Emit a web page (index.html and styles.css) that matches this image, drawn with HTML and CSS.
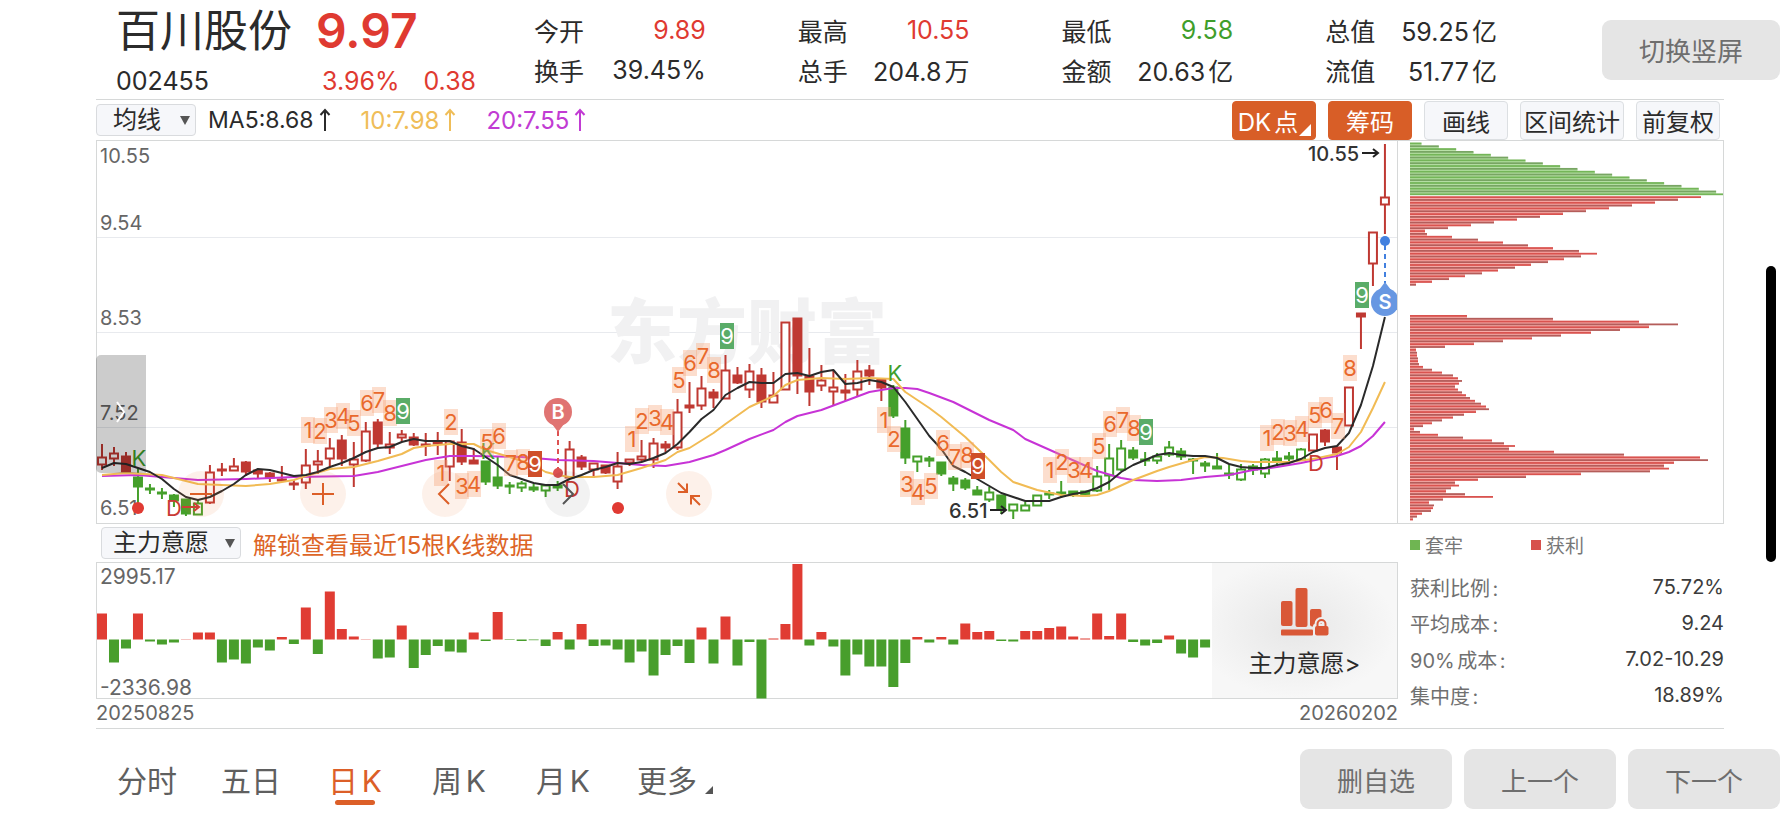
FILE: index.html
```html
<!DOCTYPE html>
<html lang="zh-CN">
<head>
<meta charset="utf-8">
<meta name="viewport" content="width=device-width, initial-scale=1">
<title>百川股份 002455</title>
<link rel="stylesheet" href="styles.css">
</head>
<body>
<div class="page">
  <header class="quote">
    <div class="identity">
      <h1 class="name">百川股份</h1>
      <strong class="price">9.97</strong>
      <span class="code">002455</span>
      <span class="change"><span>3.96%</span><span>0.38</span></span>
    </div>
    <dl class="stats">
      <div class="stat"><dt>今开</dt><dd class="up">9.89</dd></div>
      <div class="stat"><dt>最高</dt><dd class="up">10.55</dd></div>
      <div class="stat"><dt>最低</dt><dd class="down">9.58</dd></div>
      <div class="stat"><dt>总值</dt><dd>59.25亿</dd></div>
      <div class="stat"><dt>换手</dt><dd>39.45%</dd></div>
      <div class="stat"><dt>总手</dt><dd>204.8万</dd></div>
      <div class="stat"><dt>金额</dt><dd>20.63亿</dd></div>
      <div class="stat"><dt>流值</dt><dd>51.77亿</dd></div>
    </dl>
    <button class="pill" type="button">切换竖屏</button>
  </header>

  <main class="board">
    <div class="toolbar">
      <span class="picker"><select class="picker-select" aria-label="主图指标"><option>均线</option></select></span>
      <span class="ma ma5">MA5:8.68<svg class="rise" viewBox="0 0 12 24"><path d="M6 23V2M1.500 7L6 2l4.500 5"/></svg></span>
      <span class="ma ma10">10:7.98<svg class="rise" viewBox="0 0 12 24"><path d="M6 23V2M1.500 7L6 2l4.500 5"/></svg></span>
      <span class="ma ma20">20:7.55<svg class="rise" viewBox="0 0 12 24"><path d="M6 23V2M1.500 7L6 2l4.500 5"/></svg></span>
      <div class="tools">
        <button class="tool on corner" type="button">DK点</button>
        <button class="tool on" type="button">筹码</button>
        <button class="tool" type="button">画线</button>
        <button class="tool wide" type="button">区间统计</button>
        <button class="tool" type="button">前复权</button>
      </div>
    </div>

    <section class="kline">
      <svg id="kline" class="chart" viewBox="97 140 1300 382" role="img" aria-label="日K线"></svg>
      <button class="drawer" type="button" aria-label="展开"><svg viewBox="0 0 12 24"><path d="M2 2l7 10-7 10"/></svg></button>
      <div class="controls">
        <button class="round" type="button" aria-label="缩小"><svg viewBox="0 0 46 46"><path d="M12 23h22"/></svg></button>
        <button class="round" type="button" aria-label="放大"><svg viewBox="0 0 46 46"><path d="M12 23h22M23 12v22"/></svg></button>
        <button class="round" type="button" aria-label="左移"><svg viewBox="0 0 46 46"><path d="M27 13L17 23l10 10"/></svg></button>
        <button class="round grey" type="button" aria-label="右移"><svg viewBox="0 0 46 46"><path d="M19 13l10 10-10 10"/></svg></button>
        <button class="round" type="button" aria-label="退出全屏"><svg viewBox="0 0 46 46"><path d="M12 12l9 9M21 12.500V21h-9M34 34l-9-9M25 33.500V25h9"/></svg></button>
      </div>
    </section>
    <section class="chips">
      <svg id="chips" class="chart" viewBox="1398 140 325 382" role="img" aria-label="筹码分布"></svg>
    </section>

    <div class="subbar">
      <span class="picker"><select class="picker-select" aria-label="副图指标"><option>主力意愿</option></select></span>
      <a class="unlock" href="#">解锁查看最近15根K线数据</a>
    </div>
    <aside class="summary">
      <div class="legend"><span class="key green">套牢</span><span class="key red">获利</span></div>
      <dl class="facts">
        <div class="fact"><dt>获利比例:</dt><dd>75.72%</dd></div>
        <div class="fact"><dt>平均成本:</dt><dd>9.24</dd></div>
        <div class="fact"><dt>90%成本:</dt><dd>7.02-10.29</dd></div>
        <div class="fact"><dt>集中度:</dt><dd>18.89%</dd></div>
      </dl>
    </aside>

    <section class="intent">
      <svg id="intent" class="intent-chart" viewBox="97 562 1115 135" role="img" aria-label="主力意愿"></svg>
      <a class="locked" href="#">
        <svg class="lock-icon" viewBox="0 0 48 48">
          <rect x="0" y="13" width="11.500" height="25" rx="2"/>
          <rect x="14.500" y="0" width="12" height="39" rx="2"/>
          <rect x="29" y="21" width="11.500" height="17.500" rx="2"/>
          <rect x="0" y="41.500" width="32" height="6" rx="1"/>
          <rect class="halo" x="32" y="36" width="17" height="13" rx="2"/>
          <path class="halo-line" d="M36.500 40v-4a4 4 0 0 1 8 0v4"/>
          <rect x="34" y="38" width="13.500" height="9.500" rx="2"/>
          <path class="shackle" d="M36.500 40v-4a4 4 0 0 1 8 0v4"/>
        </svg>
        <span>主力意愿&gt;</span>
      </a>
    </section>
    <div class="dates"><time datetime="2025-08-25">20250825</time><time datetime="2026-02-02">20260202</time></div>
  </main>

  <footer class="bottom">
    <nav class="tabs">
      <button class="tab" type="button">分时</button>
      <button class="tab" type="button">五日</button>
      <button class="tab active" type="button">日K</button>
      <button class="tab" type="button">周K</button>
      <button class="tab" type="button">月K</button>
      <button class="tab more" type="button">更多</button>
    </nav>
    <div class="actions">
      <button class="pill" type="button">删自选</button>
      <button class="pill" type="button">上一个</button>
      <button class="pill" type="button">下一个</button>
    </div>
  </footer>
  <div class="thumb"></div>
</div>
<script src="charts.js"></script>
</body>
</html>
```

FILE: styles.css
```css
* { box-sizing: border-box; }

body {
  margin: 0;
  background: #fff;
  color: #2b2b2b;
  font-family: Inter, "Noto Sans CJK SC", sans-serif;
  text-autospace: normal;
}

h1, dl, dd { margin: 0; font-weight: 400; }

button, select {
  margin: 0;
  padding: 0;
  border: 0;
  background: none;
  color: inherit;
  font: inherit;
  text-autospace: inherit;
  cursor: pointer;
}

a { color: inherit; text-decoration: none; }

.page { position: relative; min-height: 100vh; }

.up { color: #df3a31; }
.down { color: #3f9e2b; }

/* quote header */
.quote {
  display: flex;
  align-items: center;
  height: 99px;
  padding: 0 12px 0 116px;
}

.identity {
  display: grid;
  grid-template-columns: 200px 218px;
  grid-template-rows: 62px 37px;
  align-items: center;
}

.name { font-size: 44px; line-height: 62px; }
.price { color: #df3a31; font-size: 48px; font-weight: 600; line-height: 62px; }
.code { font-size: 25px; }
.change { display: flex; gap: 24px; padding-left: 6px; color: #df3a31; font-size: 25px; }

.stats {
  display: grid;
  flex: 1;
  grid-template-columns: repeat(4, 1fr);
  grid-auto-rows: 40px;
  column-gap: 92px;
  margin-right: 105px;
  font-size: 25px;
}

.stat { display: flex; align-items: center; justify-content: space-between; white-space: nowrap; }

.pill {
  flex: none;
  min-width: 152px;
  height: 60px;
  border-radius: 9px;
  background: #e5e5e5;
  color: #6e6e6e;
  font-size: 26px;
}

.quote .pill { width: 178px; }

/* board */
.board {
  display: grid;
  grid-template-columns: 1302fr 326fr;
  margin: 0 68px 0 96px;
  border-top: 1px solid #d6d8d8;
  border-bottom: 1px solid #d6d8d8;
}

.toolbar {
  display: flex;
  grid-column: 1 / -1;
  align-items: center;
  height: 40px;
  padding-right: 4px;
  font-size: 24px;
}

.picker { position: relative; display: inline-flex; }

.picker::after {
  content: "";
  position: absolute;
  top: 12px;
  right: 6px;
  border: 5px solid transparent;
  border-top: 9px solid #555;
  border-bottom: 0;
  pointer-events: none;
}

.picker-select {
  appearance: none;
  height: 32px;
  padding: 0 34px 0 16px;
  border: 1px solid #d9dbde;
  border-radius: 4px;
  background: #f6f7fa;
  font-size: 24px;
  line-height: 30px;
}

.subbar .picker-select { padding: 0 31px 0 11px; }

.ma { display: flex; align-items: center; gap: 5px; }
.ma5 { margin-left: 12px; font-size: 23px; }
.ma10 { margin-left: 30px; color: #efbd58; }
.ma20 { margin-left: 30px; color: #c13bd3; }
.rise { width: 12px; height: 24px; fill: none; stroke: currentColor; stroke-width: 2; }

.tools { display: flex; gap: 12px; margin-left: auto; font-size: 24px; }

.tool {
  position: relative;
  min-width: 84px;
  height: 39px;
  border: 1px solid #dcdfe2;
  border-radius: 4px;
  background: #f6f7fa;
  white-space: nowrap;
}

.tool.wide { min-width: 104px; }
.tool.on { border-color: #d85e27; background: #d85e27; color: #fff; }
.tool.corner { padding-right: 12px; }

.tool.corner::after {
  content: "";
  position: absolute;
  right: 4px;
  bottom: 3px;
  border-left: 12px solid transparent;
  border-bottom: 12px solid #fff;
}

.kline { position: relative; border: 1px solid #d6d8d8; }
.chips { border: 1px solid #d6d8d8; border-left: 0; }
.chart { display: block; width: 100%; }

.drawer {
  position: absolute;
  top: 56%;
  left: -1px;
  width: 50px;
  height: 31%;
  border-radius: 5px 0 0 5px;
  background: rgba(0, 0, 0, .2);
}

.drawer svg { width: 12px; height: 24px; fill: none; stroke: #fff; stroke-width: 2; }

.controls {
  position: absolute;
  bottom: 6px;
  left: 81px;
  display: flex;
  gap: 76px;
}

.round { width: 46px; height: 46px; border-radius: 50%; background: rgba(232, 120, 50, .1); }
.round.grey { background: rgba(0, 0, 0, .05); }
.round svg { display: block; width: 46px; height: 46px; fill: none; stroke: #dc5f28; stroke-width: 2; }
.round.grey svg { stroke: #555; }

/* indicator strip */
.subbar {
  display: flex;
  align-items: center;
  gap: 12px;
  height: 38px;
  padding-left: 5px;
}

.unlock { color: #dd6527; font-size: 24px; text-autospace: no-autospace; }

.intent { display: flex; border: 1px solid #d6d8d8; }
.intent-chart { flex: 1115; min-width: 0; overflow: visible; }

.locked {
  display: flex;
  flex: 185;
  flex-direction: column;
  align-items: center;
  justify-content: center;
  gap: 8px;
  min-width: 0;
  padding-top: 6px;
  background: radial-gradient(ellipse at 45% 48%, #e7e7e7 0, #f7f7f7 70%);
  font-size: 24px;
  white-space: nowrap;
}

.lock-icon { width: 48px; height: 48px; fill: #d95837; }
.lock-icon .halo { fill: #eee; }
.lock-icon .halo-line { fill: none; stroke: #eee; stroke-width: 6; }
.lock-icon .shackle { fill: none; stroke: #d95837; stroke-width: 2; }

.dates {
  display: flex;
  justify-content: space-between;
  color: #666;
  font-size: 20px;
  line-height: 29px;
}

/* cost summary */
.summary { grid-row: 3 / 6; grid-column: 2; padding-left: 12px; font-size: 20px; }
.legend { display: flex; gap: 68px; height: 41px; align-items: center; color: #777; }
.key { display: flex; align-items: center; gap: 5px; font-size: 19px; }
.key::before { content: ""; width: 10px; height: 10px; background: #6fb552; }
.key.red::before { background: #d7514d; }
.fact { display: flex; align-items: center; justify-content: space-between; height: 36px; }
.facts { padding-top: 4px; }
.fact dt { color: #707070; }
.fact dd { color: #3c3c3c; }

/* bottom bar */
.bottom {
  display: flex;
  align-items: center;
  justify-content: space-between;
  height: 100px;
  padding: 0 12px 0 117px;
}

.tabs { display: flex; gap: 44px; color: #5f5f5f; font-size: 30px; }
.tab { position: relative; min-width: 60px; height: 60px; white-space: nowrap; }
.tab.active { color: #dc5f28; }

.tab.active::after {
  content: "";
  position: absolute;
  right: 10px;
  bottom: 4px;
  left: 10px;
  height: 5px;
  border-radius: 3px;
  background: #dc5f28;
}

.tab.more::after {
  content: "";
  position: absolute;
  right: -16px;
  bottom: 15px;
  border-left: 8px solid transparent;
  border-bottom: 8px solid #555;
}

.actions { display: flex; gap: 12px; }

.thumb {
  position: absolute;
  top: 266px;
  right: 16px;
  width: 10px;
  height: 296px;
  border-radius: 5px;
  background: #000;
}

/* chart parts */
.grid { stroke: #e8eaee; stroke-width: 1; }
.mark { fill: #f1f1f2; font-size: 70px; font-weight: 900; }
.axis { fill: #666; font-size: 20px; }
.intent-chart .axis { font-size: 21px; }
.note { fill: #333; font-size: 20px; font-weight: 500; }
.candle { stroke-width: 2; }
.candle.red { stroke: #bf3932; fill: #bf3932; }
.candle.green { stroke: #45a02b; fill: #45a02b; }
.candle .hollow { fill: #fff; }
.line { fill: none; stroke-width: 2; stroke-linejoin: round; }
.line5 { stroke: #2a2a2a; }
.line10 { stroke: #f1bb54; }
.line20 { stroke: #c733d6; }
.tag { fill: rgba(245, 160, 115, .35); }
.tag-text { fill: #e9692c; font-size: 22px; text-anchor: middle; }
.tag.high { fill: #5aac68; }
.tag.low { fill: #cf4f2a; }
.tag-text.nine { fill: #fff; }
.letter { font-size: 22px; text-anchor: middle; }
.letter.green { fill: #3f9e2b; }
.letter.red { fill: #c93a35; }
.dot { fill: #e03a33; }
.arrow { fill: none; stroke: #222; stroke-width: 2; }
.arrow.red { stroke: #c93a35; }
.buy { fill: #e07472; }
.sell { fill: #6797e2; }
.buy-dot { fill: #dd5252; }
.sell-dot { fill: #4280df; }
.buy-line, .sell-line { stroke-width: 2; stroke-dasharray: 5 4; }
.buy-line { stroke: #dd5252; }
.sell-line { stroke: #4280df; }
.pin-text { fill: #fff; font-size: 20px; font-weight: 600; text-anchor: middle; }
.bar-up { fill: #e03c33; }
.bar-down { fill: #489e2c; }
.chip-green { fill: #74b558; }
.chip-green.dim { fill: #78a563; }
.chip-green.tint { fill: #b9e2a8; }
.chip-red { fill: #d9534f; }
.chip-red.dim { fill: #b45d5a; }
.chip-red.tint { fill: #f8aeab; }
```

FILE: charts.js
```js
const STEP = 11.99;
const FIRST = 102;
const xAt = (i) => FIRST + i * STEP;

// [kind, high, bodyTop, bodyBottom, low]; R/r rising hollow/solid, G/g falling hollow/solid
const candles = [
  ['R',443,456,464,469],['R',446,452,458,465],['r',451,455,471,471],['g',468,476,486,507],['g',483,487,489,493],
  ['g',487,491,493,498],['g',493,494,500,506],['g',498,498,513,515],['G',498,502,514,514],['R',464,471,502,503],
  ['r',462,468,470,475],['R',457,465,470,470],['r',460,461,471,475],['r',469,469,473,477],['r',471,472,477,481],
  ['r',465,478,479,481],['r',479,482,484,489],['R',448,464,482,488],['R',449,460,464,473],['R',437,447,458,465],
  ['r',434,439,458,465],['R',441,458,464,486],['R',421,430,460,461],['r',418,421,443,447],['R',431,443,447,453],
  ['R',429,433,437,441],['r',432,436,444,445],['r',432,443,444,455],['r',431,441,443,454],['R',440,440,466,480],
  ['r',428,441,461,464],['r',447,459,463,463],['g',460,460,481,484],['g',455,476,485,488],['g',481,484,485,493],
  ['G',480,482,487,491],['g',483,486,489,491],['G',484,484,490,496],['g',480,484,487,490],['R',440,448,477,477],
  ['r',454,456,466,469],['R',462,462,469,477],['r',464,464,472,473],['R',451,465,481,488],['R',458,458,462,465],
  ['R',439,455,459,461],['R',437,442,459,467],['r',440,443,447,451],['R',398,411,447,449],['r',381,404,407,412],
  ['R',375,387,405,409],['r',388,391,397,407],['R',354,369,398,398],['r',366,374,382,383],['R',363,370,389,397],
  ['r',367,374,401,407],['R',371,394,402,402],['R',321,321,389,389],['r',317,317,375,393],['r',347,375,391,405],
  ['R',364,379,385,390],['R',369,386,391,404],['r',373,389,392,400],['R',359,370,389,395],['r',364,369,375,384],
  ['r',378,378,387,400],['g',384,386,415,417],['g',419,427,457,463],['G',455,455,461,471],['g',455,457,460,466],
  ['g',461,461,473,475],['g',475,477,483,490],['g',477,479,487,489],['g',485,489,494,494],['G',486,491,499,501],
  ['g',494,494,509,513],['G',503,503,510,518],['G',501,504,510,510],['G',494,494,505,505],['G',489,492,494,498],
  ['g',480,491,493,497],['g',490,490,494,496],['g',490,490,495,495],['G',465,475,490,491],['G',443,457,475,489],
  ['G',439,447,469,470],['g',446,449,457,459],['g',451,458,460,465],['G',452,455,460,463],['G',440,446,454,456],
  ['g',447,450,456,459],['g',457,458,460,473],['g',460,462,465,471],['g',452,465,468,468],['g',464,472,474,478],
  ['G',463,468,479,480],['g',463,465,469,474],['G',457,458,473,477],['G',450,457,460,465],['g',451,455,458,461],
  ['G',447,448,459,459],['R',433,433,450,450],['r',428,429,441,445],['r',446,446,452,469],['R',386,386,425,425],
  ['r',312,312,316,348],['R',231,231,263,285],['R',143,196,204,233]
];

const ma5 = [467,462,463,467,471,478,488,496,499,496,490,483,474,468,469,472,475,474,471,466,462,457,451,447,446,441,
  438,440,440,440,445,448,456,464,474,478,482,484,484,478,474,469,466,462,463,461,457,452,443,431,418,409,394,387,381,
  382,382,373,372,375,371,369,383,382,379,381,386,401,418,435,448,465,471,478,485,492,496,500,500,500,496,493,491,487,
  481,471,464,459,454,452,454,455,455,457,463,466,467,467,464,462,458,451,447,445,432,404,365,316].map((y, i) => [i, y]);

const ma10 = [[0,474],[2,472],[5,474],[6,477],[8,483],[10,484],[12,485],[14,483],[16,479],[17,475],[19,468],[21,466],
  [23,460],[25,453],[26,447],[27,445],[29,443],[31,443],[32,449],[34,456],[36,464],[37,471],[38,474],[39,476],[41,476],
  [43,474],[45,467],[47,459],[48,451],[49,447],[51,432],[52,423],[54,406],[56,395],[57,384],[58,379],[60,377],[62,378],
  [64,377],[66,378],[67,391],[69,407],[70,416],[72,436],[74,459],[75,471],[76,481],[78,489],[80,494],[82,495],[83,494],
  [84,490],[86,479],[88,470],[89,466],[91,459],[92,456],[93.5,457],[95,460],[96,461],[99,461],[101,458],[103,453],
  [104,446],[105,431],[106,407],[107,381]];

const ma20 = [[0,475],[3,474],[5,476],[8,479],[12,478],[16,476],[21,475],[23,471],[25,465],[27,459],[29,455],[31,455],
  [35,456],[38,459],[41,460],[43,462],[45,464],[47,465],[49,461],[51,454],[52,449],[54,438],[56,429],[57,421],[58,415],
  [60,409],[62,400],[64,391],[66,387],[67,387],[68,388],[69,392],[71,401],[74,419],[76,429],[77,438],[80,454],[83,470],
  [85,477],[86,479],[88,480],[90,479],[92,476],[94,474],[96,469],[98,466],[100,462],[102,457],[103,455],[104,451],
  [105,445],[106,435],[107,421]];

// [digit, centre x, centre y, emphasis]
const tags = [
  [1,308,429],[2,320,430],[3,331,419],[4,343,415],[5,354,422],[6,367,402],[7,379,399],[8,390,412],[9,403,410,'high'],
  [1,441,472],[2,451,421],[3,462,485],[4,474,483],[5,487,441],[6,499,435],[7,511,462],[8,523,461],[9,535,463,'low'],
  [1,632,438],[2,642,420],[3,655,417],[4,667,421],[5,679,379],[6,690,362],[7,703,355],[8,714,369],[9,727,335,'high'],
  [1,884,419],[2,894,438],[3,907,483],[4,918,491],[5,931,485],[6,943,442],[7,955,456],[8,967,454],[9,978,465,'low'],
  [1,1050,469],[2,1062,461],[3,1074,469],[4,1086,469],[5,1099,445],[6,1110,423],[7,1123,419],[8,1134,427],[9,1146,431,'high'],
  [1,1267,437],[2,1278,431],[3,1290,432],[4,1302,428],[5,1315,414],[6,1326,409],[7,1338,425],[8,1350,367],[9,1362,294,'high']
];

const intent = [26,-23,-9,26,-2,-5,-3,0.3,7,7,-23,-20,-24,-8,-11,2.5,-4.5,32,-14.5,48,10.5,3,0.3,-19,-18,14,-28.5,-15.5,
  -6.5,-12,-13,7,-1.5,27.5,-0.5,-1.5,-0.7,-6.5,7.5,-10,15.5,-6.5,-6,-10,-23,-12,-36,-15.5,-6.5,-23.5,12,-24,23,-26,-2.5,
  -59,1,15.5,75.5,-6,7.5,-7,-36,-15,-27,-27,-47.5,-23.5,2.5,-3,2.5,-5,16,7.5,8.5,-1.5,-2,8.5,8.5,11.5,13,3,1,26,3.5,26,
  -2.5,-6,-3.5,4,-14,-18,-8];

const trapped = Array.from({ length: 19 }, (_, k) => Math.min(313, 11.5 + 17.33 * k));
const profitHigh = [291,268,245,222,199,176,153,130,107,84,61,38,15,17,42,68,93,118,143,169,187,171,154,138,121,105,88,
  72,55,39,22,6];
const profitLow = [57,143,229,268,239,210,181,151,122,93,64,35,6,7,7,8,8,9,13,22,32,43,48,52,49,45,48,52,56,60,65,71,76,
  79,66,54,43,32,22,13,4,10,28,53,82,94,105,99,144,214,290,298,264,254,259,240,171,116,68,45,49,41,36,55,83,33,19,24,23,
  21,12,7,3];

const rect = (cls, x, y, w, h) => `<rect class="${cls}" x="${x}" y="${y}" width="${w}" height="${h}"/>`;
const text = (cls, x, y, s) => `<text class="${cls}" x="${x}" y="${y}">${s}</text>`;

function drawCandle([kind, high, top, bottom, low], i) {
  const x = xAt(i);
  const hollow = kind === 'R' || kind === 'G';
  const tone = kind.toLowerCase() === 'r' ? 'red' : 'green';
  const height = Math.max(bottom - top - 1, 1);
  return `<g class="candle ${tone}"><path d="M${x} ${high}V${low}"/>` +
    rect(hollow ? 'hollow' : '', x - 4, top + 0.5, 8, height) + '</g>';
}

function drawLine(cls, points) {
  return `<polyline class="line ${cls}" points="${points.map(([i, y]) => `${xAt(i)},${y}`).join(' ')}"/>`;
}

function drawTag([digit, x, y, tone]) {
  return rect(`tag ${tone || ''}`, x - 7, y - 13, 14, 26) +
    text(`tag-text ${tone ? 'nine' : ''}`, x, y + 8, digit);
}

function drawKline() {
  let out = [236, 331, 426].map((y) => `<path class="grid" d="M97 ${y}.5H1397"/>`).join('');
  out += text('mark', 607, 357, '东方财富');
  out += [['10.55', 162], ['9.54', 229], ['8.53', 324], ['7.52', 419], ['6.51', 514]]
    .map(([s, y]) => text('axis', 100, y, s)).join('');
  out += candles.map(drawCandle).join('');
  out += drawLine('line20', ma20) + drawLine('line10', ma10) + drawLine('line5', ma5);
  out += text('letter green', 488, 458, 'K');
  out += tags.map(drawTag).join('');
  out += text('letter green', 139, 465, 'K') + text('letter green', 895, 380, 'K');
  out += text('letter red', 174, 515, 'D') + text('letter red', 572, 496, 'D') + text('letter red', 1316, 470, 'D');
  out += '<circle class="dot" cx="138" cy="507" r="6"/><circle class="dot" cx="618" cy="507" r="6"/>';
  out += '<path class="arrow red" d="M182 506h16M194 502l5 4-5 4"/>';
  out += text('note', 1308, 160, '10.55') + '<path class="arrow" d="M1362 152h16M1373 148l5 4-5 4"/>';
  out += text('note', 949, 517, '6.51') + '<path class="arrow" d="M990 509h16M1001 505l5 4-5 4"/>';
  out += '<path class="buy-line" d="M558 430v42"/><circle class="buy-dot" cx="558" cy="472" r="5"/>';
  out += '<path class="buy" d="M552 423h12l-6 8z"/><circle class="buy" cx="558" cy="411" r="14"/>' + text('pin-text', 558, 418, 'B');
  out += '<path class="sell-line" d="M1385 244v38"/><circle class="sell-dot" cx="1385" cy="240" r="5"/>';
  out += '<path class="sell" d="M1379 289h12l-6-8z"/><circle class="sell" cx="1385" cy="301" r="14"/>' + text('pin-text', 1385, 308, 'S');
  document.getElementById('kline').innerHTML = out;
}

function drawChips() {
  const left = 1410;
  const pitch = 2.828;
  let out = '';
  const block = (tone, widths, firstRow) => {
    widths.forEach((w, k) => {
      const y = 141.5 + (firstRow + k) * pitch;
      const next = widths[k + 1];
      if (next) out += rect(`${tone} tint`, left, y + 1, Math.min(w, next), pitch);
      out += rect(k % 2 ? `${tone} dim` : tone, left, y, w, 1.8);
    });
  };
  block('chip-green', trapped, 0);
  block('chip-red', profitHigh, 19);
  block('chip-red', profitLow, 61);
  document.getElementById('chips').innerHTML = out;
}

function drawIntent() {
  const zero = 638.5;
  let out = intent.map((v, i) =>
    rect(v > 0 ? 'bar-up' : 'bar-down', xAt(i) - 5, v > 0 ? zero - v : zero, 10, Math.abs(v))).join('');
  out += text('axis', 100, 583, '2995.17') + text('axis', 100, 694, '-2336.98');
  document.getElementById('intent').innerHTML = out;
}

drawKline();
drawChips();
drawIntent();
```
